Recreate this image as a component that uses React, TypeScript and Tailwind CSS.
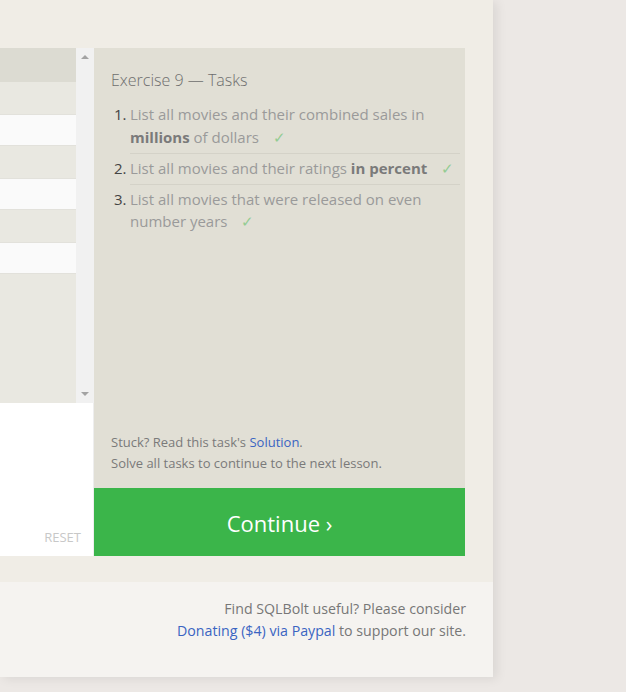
const ROWS = ["gray", "white", "gray", "white", "gray", "white"];

const TASKS = [
  { n: 1, body: <>List all movies and their combined sales in <b className="font-bold text-[#7a7a7a]">millions</b> of dollars</> },
  { n: 2, body: <>List all movies and their ratings <b className="font-bold text-[#7a7a7a]">in percent</b></> },
  { n: 3, body: <>List all movies that were released on even number years</> },
];

function Check() {
  return <span className="ml-[14px] text-[#93cc93]">✓</span>;
}

export default function App() {
  return (
    <div className="h-[692px] w-[626px] overflow-hidden bg-[#ece8e5] font-['Open_Sans',sans-serif]">
      <div className="w-[493px] bg-[#f0ede6] shadow-[4px_2px_10px_rgba(0,0,0,0.08)]">
        {/* exercise block */}
        <div className="flex pt-[48px] pr-[28px]">
          {/* left: results table + editor */}
          <div className="flex w-[94px] flex-col">
            <div className="flex h-[355px]">
              <div className="flex flex-1 flex-col bg-[#e9e8e1]">
                <div className="h-[34px] bg-[#dcdbd2]" />
                {ROWS.map((r, i) => (
                  <div
                    key={i}
                    className={
                      r === "white"
                        ? "h-[32px] border-y border-[#e2e1db] bg-[#fafafa]"
                        : "h-[32px] bg-[#e9e8e1]"
                    }
                  />
                ))}
              </div>
              <div className="flex w-[18px] flex-col items-center justify-between bg-[#f1f1f1] py-[7px]">
                <span className="h-0 w-0 border-x-[4px] border-b-[4px] border-x-transparent border-b-[#a3a3a3]" />
                <span className="h-0 w-0 border-x-[4px] border-t-[4px] border-x-transparent border-t-[#a3a3a3]" />
              </div>
            </div>
            <div className="flex h-[153px] items-end justify-end border-r border-[#eeeeee] bg-white pr-[12px] pb-[9px]">
              <span className="text-[13px] text-[#c8c8c8]">RESET</span>
            </div>
          </div>

          {/* right: tasks */}
          <div className="flex w-[371px] flex-col">
            <div className="flex h-[440px] flex-col justify-between bg-[#e1dfd5] pt-[20px] pr-[5px] pb-[14px] pl-[17px]">
              <div>
                <h2 className="text-[16px] font-light text-[#6e6e6e]">Exercise 9 — Tasks</h2>
                <ol className="mt-[11px] pl-[3px] text-[15px] leading-[23px] text-[#9a9a9a]">
                  {TASKS.map((t, i) => (
                    <li key={t.n} className="flex">
                      <span className="w-[16px] shrink-0 text-[#444]">{t.n}.</span>
                      <div
                        className={
                          i < TASKS.length - 1
                            ? "mb-[3px] flex-1 border-b border-[#d4d2c8] pb-[4px]"
                            : "flex-1 leading-[22px]"
                        }
                      >
                        {t.body}
                        <Check />
                      </div>
                    </li>
                  ))}
                </ol>
              </div>
              <div className="text-[13px] leading-[21px] text-[#7a7a7a]">
                <p>
                  Stuck? Read this task's <span className="text-[#3a64c2]">Solution</span>.
                </p>
                <p>Solve all tasks to continue to the next lesson.</p>
              </div>
            </div>
            <div className="flex h-[68px] items-center justify-center bg-[#3bb54a] pt-[3px] text-[22px] text-white">
              Continue ›
            </div>
          </div>
        </div>

        <div className="h-[26px]" />

        {/* footer */}
        <div className="h-[95px] bg-[#f5f3f0] pt-[16px] pr-[27px] text-right text-[14.2px] leading-[22px] text-[#777]">
          <p>Find SQLBolt useful? Please consider</p>
          <p>
            <span className="text-[#3a64c2]">Donating ($4) via Paypal</span> to support our site.
          </p>
        </div>
      </div>
    </div>
  );
}
